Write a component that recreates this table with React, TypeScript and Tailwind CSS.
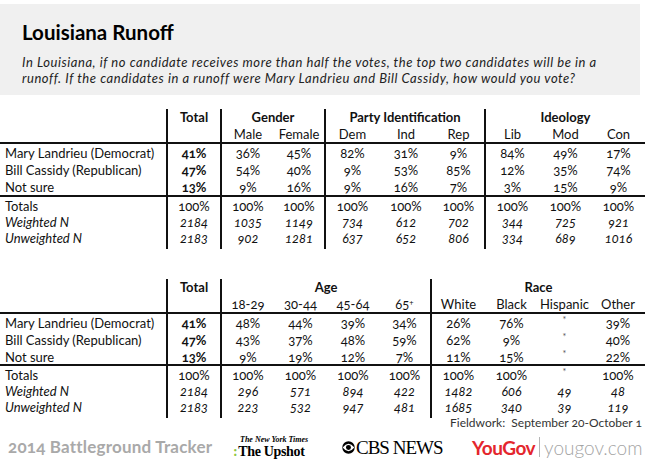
/** Louisiana Runoff crosstab card */

type Group = { name: string; cols: React.ReactNode[] };
type Row = { label: string; values: string[]; italic?: boolean; boldTotal?: boolean };

const Star = () => <span className="relative -top-[4px] text-[9px] leading-none text-[#555]">*</span>;

/** テーブル1つ分（見出し2段 + 上段3行 + 下段3行） */
function Crosstab({
  cols,
  groups,
  top,
  bottom,
  topH,
  bottomH,
}: {
  cols: string;
  groups: Group[];
  top: Row[];
  bottom: Row[];
  topH: string[];
  bottomH: string[];
}) {
  // 右側に縦罫線を引く列
  const ruled = new Set<number>([0, 1]);
  let idx = 2;
  groups.forEach((g, gi) => {
    idx += g.cols.length;
    if (gi < groups.length - 1) ruled.add(idx - 1);
  });
  const rule = (i: number) => (ruled.has(i) ? "border-r-2 border-[#111]" : "");

  const renderRow = (r: Row, h: string) => (
    <div key={r.label} className={`grid ${cols} ${h} ${r.italic ? "italic" : ""}`}>
      <div className={`pl-[5px] whitespace-nowrap flex items-center ${rule(0)}`}>{r.label}</div>
      {r.values.map((v, i) => (
        <div
          key={i}
          className={`flex items-center justify-center ${rule(i + 1)} ${i === 0 && r.boldTotal ? "font-bold" : ""}`}
        >
          {v === "*" ? <Star /> : v}
        </div>
      ))}
    </div>
  );

  let start = 3;
  return (
    <div className="w-[645px] text-[13px] text-[#111]">
      {/* 見出し */}
      <div className={`grid ${cols} grid-rows-[17px_16px]`}>
        <div className={`col-start-1 row-start-1 row-span-2 ${rule(0)}`} />
        <div className={`col-start-2 row-start-1 row-span-2 font-bold text-center leading-[17px] ${rule(1)}`}>
          Total
        </div>
        {groups.map((g, gi) => {
          const s = start;
          start += g.cols.length;
          const last = s + g.cols.length - 2;
          return (
            <div
              key={g.name}
              className={`row-start-1 font-bold text-center leading-[17px] whitespace-nowrap ${rule(last)}`}
              style={{ gridColumn: `${s} / span ${g.cols.length}` }}
            >
              {g.name}
            </div>
          );
        })}
        {groups
          .flatMap((g) => g.cols)
          .map((c, i) => (
            <div
              key={i}
              className={`row-start-2 text-center leading-[16px] whitespace-nowrap ${rule(i + 2)}`}
              style={{ gridColumn: `${i + 3}` }}
            >
              {c}
            </div>
          ))}
      </div>
      <div className="h-[2px] bg-[#111]" />
      {top.map((r, i) => renderRow(r, topH[i]))}
      <div className="h-[2px] bg-[#111]" />
      {bottom.map((r, i) => renderRow(r, bottomH[i]))}
    </div>
  );
}

const t1Groups: Group[] = [
  { name: "Gender", cols: ["Male", "Female"] },
  { name: "Party Identification", cols: ["Dem", "Ind", "Rep"] },
  { name: "Ideology", cols: ["Lib", "Mod", "Con"] },
];

const t1Top: Row[] = [
  { label: "Mary Landrieu (Democrat)", boldTotal: true, values: ["41%", "36%", "45%", "82%", "31%", "9%", "84%", "49%", "17%"] },
  { label: "Bill Cassidy (Republican)", boldTotal: true, values: ["47%", "54%", "40%", "9%", "53%", "85%", "12%", "35%", "74%"] },
  { label: "Not sure", boldTotal: true, values: ["13%", "9%", "16%", "9%", "16%", "7%", "3%", "15%", "9%"] },
];
const t1Bottom: Row[] = [
  { label: "Totals", values: Array(9).fill("100%") },
  { label: "Weighted N", italic: true, values: ["2184", "1035", "1149", "734", "612", "702", "344", "725", "921"] },
  { label: "Unweighted N", italic: true, values: ["2183", "902", "1281", "637", "652", "806", "334", "689", "1016"] },
];

const t2Groups: Group[] = [
  {
    name: "Age",
    cols: [
      "18-29",
      "30-44",
      "45-64",
      <span key="65">
        65<span className="relative -top-[4px] text-[8px] leading-none">+</span>
      </span>,
    ],
  },
  { name: "Race", cols: ["White", "Black", "Hispanic", "Other"] },
];

const t2Top: Row[] = [
  { label: "Mary Landrieu (Democrat)", boldTotal: true, values: ["41%", "48%", "44%", "39%", "34%", "26%", "76%", "*", "39%"] },
  { label: "Bill Cassidy (Republican)", boldTotal: true, values: ["47%", "43%", "37%", "48%", "59%", "62%", "9%", "*", "40%"] },
  { label: "Not sure", boldTotal: true, values: ["13%", "9%", "19%", "12%", "7%", "11%", "15%", "*", "22%"] },
];
const t2Bottom: Row[] = [
  { label: "Totals", values: ["100%", "100%", "100%", "100%", "100%", "100%", "100%", "*", "100%"] },
  { label: "Weighted N", italic: true, values: ["2184", "296", "571", "894", "422", "1482", "606", "49", "48"] },
  { label: "Unweighted N", italic: true, values: ["2183", "223", "532", "947", "481", "1685", "340", "39", "119"] },
];

function CbsEye() {
  return (
    <svg width="13" height="13" viewBox="0 0 24 24">
      <circle cx="12" cy="12" r="11.5" fill="#000" />
      <path d="M1.2 12 Q12 -1.5 22.8 12 Q12 25.5 1.2 12 Z" fill="#fff" />
      <circle cx="12" cy="12" r="4.6" fill="#000" />
    </svg>
  );
}

export default function App() {
  return (
    <div className="w-[647px] h-[472px] bg-white overflow-hidden font-['Lato','Noto_Sans',sans-serif] oldstyle-nums">
      {/* 見出しボックス */}
      <div className="mt-[4px] w-[640px] h-[91px] bg-[#f0f0f0] pl-[22px]">
        <h1 className="pt-[14px] text-[20.5px] leading-[28px] font-bold text-black">Louisiana Runoff</h1>
        <p className="mt-[8px] text-[13px] leading-[16px] italic text-[#222] whitespace-nowrap tracking-[0.55px]">
          In Louisiana, if no candidate receives more than half the votes, the top two candidates will be in a
          <br />
          runoff. If the candidates in a runoff were Mary Landrieu and Bill Cassidy, how would you vote?
        </p>
      </div>

      <div className="mt-[14px]">
        <Crosstab
          cols="grid-cols-[168px_54px_52px_52px_53px_54px_53px_53px_53px_53px]"
          groups={t1Groups}
          top={t1Top}
          bottom={t1Bottom}
          topH={["h-[17px]", "h-[17px]", "h-[17px]"]}
          bottomH={["h-[16px]", "h-[16px]", "h-[16px]"]}
        />
      </div>

      <div className="mt-[34px]">
        <Crosstab
          cols="grid-cols-[168px_54px_52px_53px_52px_53px_53px_53px_53px_54px]"
          groups={t2Groups}
          top={t2Top}
          bottom={t2Bottom}
          topH={["h-[17px]", "h-[17px]", "h-[16px]"]}
          bottomH={["h-[16px]", "h-[16px]", "h-[16px]"]}
        />
      </div>

      <div className="mt-[2px] w-[642px] text-right text-[12px] leading-[14px] text-[#333]">
        Fieldwork:&nbsp; September 20-October 1
      </div>

      {/* フッター：ロゴ列 */}
      <div className="mt-[4px] flex items-center h-[26px]">
        <div className="w-[233px] pl-[8px] text-[17px] font-bold text-[#a9a9a9] whitespace-nowrap tracking-[0.2px]">
          2014 Battleground Tracker
        </div>
        <div className="w-[109px] flex flex-col leading-none">
          <span className="pl-[7px] text-[8px] font-bold font-['Liberation_Serif',serif] italic text-black whitespace-nowrap">
            The New York Times
          </span>
          <span className="mt-[1px] flex items-center text-[14px] font-black font-['Liberation_Serif',serif] text-black tracking-tight whitespace-nowrap">
            <span className="text-[#8cc63e] mr-[1px]">:</span>The Upshot
          </span>
        </div>
        <div className="w-[130px] flex items-center">
          <CbsEye />
          <span className="ml-[1px] text-[19px] leading-none font-['Liberation_Serif',serif] text-black tracking-[-1px] whitespace-nowrap">
            CBS NEWS
          </span>
        </div>
        <div className="flex items-center">
          <span className="text-[19px] font-bold tracking-tight leading-none text-[#e4262d]">YouGov</span>
          <span className="ml-[4px] w-px h-[20px] bg-[#b5b5b5]" />
          <span className="ml-[4px] text-[19px] font-light text-[#a4a4a4] leading-none">yougov.com</span>
        </div>
      </div>
    </div>
  );
}
